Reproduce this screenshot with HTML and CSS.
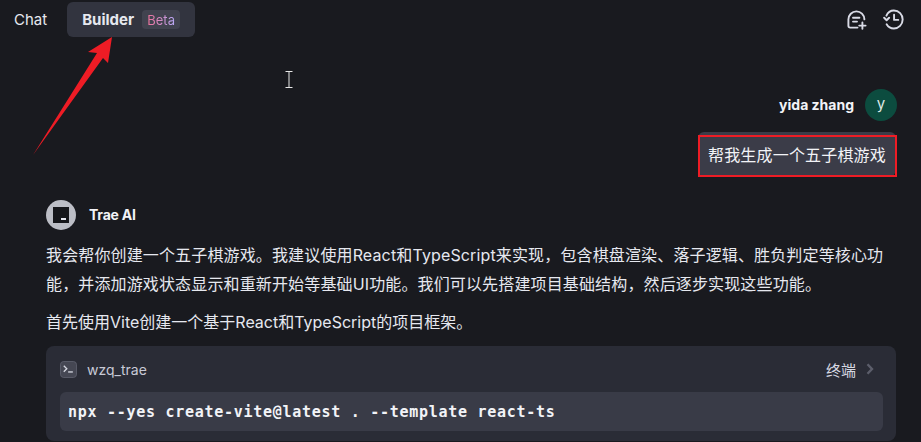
FILE: index.html
```html
<!DOCTYPE html>
<html lang="zh-CN">
<head>
    <meta charset="UTF-8">
    <title>Trae Builder</title>
    <link rel="stylesheet" href="styles.css">
</head>
<body>

<div class="app">
    <div class="topbar">
        <div class="tabs">
            <div class="tab">Chat</div>
            <div class="tab active">Builder <span class="badge"><span class="badge-text">Beta</span></span></div>
        </div>
        <div class="top-actions">
            <svg class="top-icon" viewBox="0 0 20 20" fill="none" stroke="currentColor" stroke-width="1.9" stroke-linecap="round" stroke-linejoin="round">
                <path d="M10.5 17.6H3.2C2 17.6 1.4 17 1.4 15.8V9.6C1.4 5 5 1.4 9.4 1.4 13.8 1.4 17.2 4.8 17.4 9.4"/>
                <path d="M6 7.8H12.4M6 11.6H10"/>
                <path d="M15.4 12.4V18.8M12.2 15.6H18.6"/>
            </svg>
            <svg class="top-icon large" viewBox="0 0 22 22" fill="none" stroke="currentColor" stroke-width="2" stroke-linecap="round" stroke-linejoin="round">
                <path d="M3.6 7C5 3.6 7.8 1.6 11.4 1.6 16.6 1.6 20.6 5.8 20.6 11 20.6 16.2 16.4 20.4 11.4 20.4 8 20.4 5.4 18.8 3.8 16"/>
                <path d="M1.2 9.2 3.8 11.8 6.4 9.2"/>
                <path d="M11.6 6V11.4H16"/>
            </svg>
        </div>
    </div>

    <div class="chat">
        <div class="user-row">
            <span class="user-name">yida zhang</span>
            <div class="user-avatar">y</div>
        </div>
        <div class="user-msg-row">
            <div class="user-msg">帮我生成一个五子棋游戏</div>
        </div>

        <div class="ai-row">
            <div class="ai-avatar"><div class="ai-logo"><i></i></div></div>
            <span class="ai-name">Trae AI</span>
        </div>
        <p class="para">我会帮你创建一个五子棋游戏。我建议使用React和TypeScript来实现，包含棋盘渲染、落子逻辑、胜负判定等核心功能，并添加游戏状态显示和重新开始等基础UI功能。我们可以先搭建项目基础结构，然后逐步实现这些功能。</p>
        <p class="para second">首先使用Vite创建一个基于React和TypeScript的项目框架。</p>

        <div class="term-card">
            <div class="term-head">
                <div class="term-title">
                    <svg class="term-icon" viewBox="0 0 18 18" fill="none">
                        <rect x="0.5" y="0.5" width="17" height="17" rx="3.5" fill="#454753" stroke="#5b5d6a"/>
                        <path d="M4 5 7.2 8.2 4 11.4" stroke="#d5d7e0" stroke-width="1.4"/>
                        <path d="M8.6 11.6H13.6" stroke="#d5d7e0" stroke-width="1.4"/>
                    </svg>
                    <span>wzq_trae</span>
                </div>
                <div class="term-link">
                    <span>终端</span>
                    <svg class="chevron" viewBox="0 0 8 12" fill="none" stroke="#5c5e6b" stroke-width="2.4"><path d="M1.5 1.2 6 6 1.5 10.8"/></svg>
                </div>
            </div>
            <div class="code">npx --yes create-vite@latest . --template react-ts</div>
        </div>
    </div>

    <!-- annotation arrow + text cursor from the screenshot -->
    <svg class="arrow" viewBox="0 0 100 130">
        <path d="M1 129 L65 27 L56 26 L80 11 L76 37 L71 32 Z" fill="#ee1c25"/>
    </svg>
    <svg class="ibeam" viewBox="0 0 8 17" fill="none" stroke="#e8e8e8" stroke-width="1">
        <path d="M0.5 0.5H7.5M4 0.5V16.5M0.5 16.5H7.5"/>
    </svg>
</div>

</body>
</html>
```

FILE: styles.css
```css
* {
    box-sizing: border-box;
}
html, body {
    margin: 0;
    height: 100%;
    overflow: hidden;
}
body {
    background-color: #191a1f;
    color: #e6e8ef;
    font-family: Inter, "Noto Sans CJK SC", sans-serif;
}
.app {
    position: relative;
    width: 921px;
    height: 442px;
    overflow: hidden;
}
.topbar {
    display: flex;
    justify-content: space-between;
    align-items: center;
    height: 35px;
    margin-top: 2px;
    padding: 0 17px 0 14px;
}
.tabs {
    display: flex;
    align-items: center;
    gap: 20px;
}
.tab {
    font-size: 15px;
    color: #e6e8ef;
}
.tab.active {
    display: flex;
    align-items: center;
    gap: 8px;
    width: 128px;
    height: 35px;
    padding: 0 15px;
    background-color: #32343f;
    border-radius: 6px;
    font-weight: 700;
}
.badge {
    display: flex;
    justify-content: center;
    align-items: center;
    width: 39px;
    height: 19px;
    background-color: #41434f;
    border-radius: 4px;
    font-size: 13px;
    font-weight: 400;
}
.badge-text {
    background: linear-gradient(90deg, #f0709a, #b6a8f5);
    -webkit-background-clip: text;
    background-clip: text;
    color: transparent;
}
.top-actions {
    display: flex;
    align-items: center;
    gap: 16px;
}
.top-icon {
    display: block;
    width: 20px;
    height: 20px;
    color: #d9dbe6;
}
.top-icon.large {
    width: 21px;
    height: 21px;
}
.chat {
    padding: 0 24px 0 46px;
}
.user-row {
    display: flex;
    justify-content: flex-end;
    align-items: center;
    gap: 11px;
    margin-top: 52px;
}
.user-name {
    padding-bottom: 2px;
    font-size: 14px;
    font-weight: 700;
    color: #f2f3f7;
}
.user-avatar {
    display: flex;
    justify-content: center;
    align-items: center;
    width: 32px;
    height: 32px;
    padding-bottom: 3px;
    border-radius: 50%;
    background-color: #0c4c3f;
    font-size: 15px;
    color: #dfe7e4;
}
.user-msg-row {
    display: flex;
    justify-content: flex-end;
    margin-top: 11px;
    padding-right: 1px;
}
.user-msg {
    position: relative;
    width: 198px;
    height: 44px;
    padding: 0 0 0 10px;
    line-height: 47px;
    font-size: 16px;
    letter-spacing: 0.18px;
    color: #f2f3f7;
    background-color: #3b3c48;
    border-radius: 6px;
}
.user-msg::after {
    content: "";
    position: absolute;
    left: 0;
    right: -1px;
    top: 3px;
    bottom: -1px;
    border: 2px solid #ee1c25;
}
.ai-row {
    display: flex;
    align-items: center;
    gap: 13px;
    margin-top: 24px;
}
.ai-avatar {
    display: flex;
    justify-content: center;
    align-items: center;
    width: 30px;
    height: 30px;
    border-radius: 50%;
    background-color: #bcbec6;
}
.ai-logo {
    position: relative;
    width: 16px;
    height: 16px;
    background-color: #16171b;
}
.ai-logo i {
    position: absolute;
    right: 3px;
    bottom: 3px;
    width: 5px;
    height: 2px;
    background-color: #e6e8ef;
}
.ai-name {
    padding-bottom: 2px;
    font-size: 14px;
    font-weight: 700;
    letter-spacing: -0.2px;
    color: #f2f3f7;
}
.para {
    margin: 11px 0 0;
    font-size: 16px;
    line-height: 29px;
    letter-spacing: 0.14px;
    color: #e6e8ef;
}
.para.second {
    margin-top: 9px;
    letter-spacing: 0;
}
.term-card {
    margin: 9px 1px 0 0;
    padding: 0 13px 10px 14px;
    background-color: #2a2c36;
    border-radius: 8px;
}
.term-head {
    display: flex;
    justify-content: space-between;
    align-items: center;
    height: 46px;
    font-size: 14px;
    color: #c8cad6;
}
.term-title {
    display: flex;
    align-items: center;
    gap: 10px;
}
.term-icon {
    display: block;
    width: 17px;
    height: 17px;
}
.term-link {
    display: flex;
    align-items: center;
    gap: 10px;
    padding-right: 9px;
    font-size: 15px;
    color: #d6d8e2;
}
.chevron {
    display: block;
    width: 8px;
    height: 12px;
}
.code {
    height: 39px;
    padding-left: 8px;
    line-height: 40px;
    background-color: #393b47;
    border-radius: 6px;
    font-family: "DejaVu Sans Mono", monospace;
    font-size: 15px;
    font-weight: 700;
    letter-spacing: 0.72px;
    color: #f2f3f7;
    white-space: pre;
}
.arrow {
    position: absolute;
    left: 32px;
    top: 26px;
    width: 100px;
    height: 130px;
}
.ibeam {
    position: absolute;
    left: 285px;
    top: 71px;
    width: 8px;
    height: 17px;
}
```
